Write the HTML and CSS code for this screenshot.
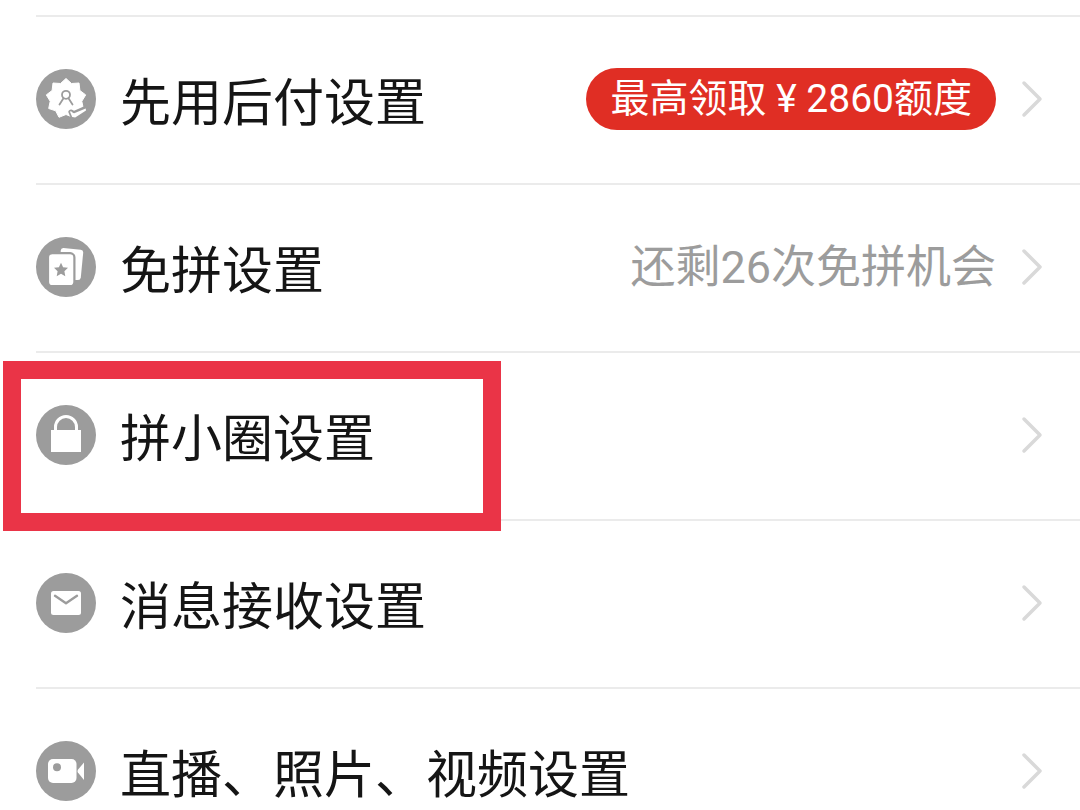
FILE: index.html
```html
<!DOCTYPE html>
<html lang="zh-CN">
<head>
    <meta charset="UTF-8">
    <meta name="viewport" content="width=device-width, initial-scale=1.0">
    <title>设置</title>
    <link rel="stylesheet" href="styles.css">
</head>
<body>
    <ul class="settings">
        <li class="item">
            <a class="row" href="#pay-later">
                <svg class="icon" viewBox="0 0 60 60" aria-hidden="true">
                    <circle cx="30" cy="30" r="30" fill="#9c9c9c"/>
                    <path d="M30 9.5L35.5 14.5L43 14L43.9 21.5L49.7 25.9L45.8 32.3L47.3 39.5L40.3 41.8L37 48.3L30 45.5L23 48.3L19.7 41.8L12.7 39.5L14.2 32.3L10.3 25.9L16.1 21.5L17 14L24.5 14.5Z" fill="#fff" stroke="#fff" stroke-linejoin="round"/>
                    <circle cx="30" cy="25.8" r="4" fill="none" stroke="#9c9c9c" stroke-width="1.8"/>
                    <path d="M27.5 29.2L23.5 35.5M32.5 29.2L36.5 35.5" fill="none" stroke="#9c9c9c" stroke-width="1.8" stroke-linecap="round"/>
                    <path d="M34 42.8C35 40.8 36.3 43.6 38.2 43.6L49.5 38.6L50.5 41.3L39.2 48.6L36.2 48Z" fill="#fff" stroke="#9c9c9c" stroke-width="3.4" stroke-linejoin="round"/>
                    <path d="M34 42.8C35 40.8 36.3 44.2 38.2 44.2L49.7 39.4L50 41.4L39.2 48.4L36.2 48Z" fill="#fff"/>
                </svg>
                <span class="label">先用后付设置</span>
                <span class="badge">最高领取 ¥ 2860额度</span>
                <svg class="arrow" viewBox="0 0 24 40" aria-hidden="true"><path d="M4 4L20 20L4 36"/></svg>
            </a>
        </li>
        <li class="item">
            <a class="row" href="#skip-group">
                <svg class="icon" viewBox="0 0 60 60" aria-hidden="true">
                    <circle cx="30" cy="30" r="30" fill="#9c9c9c"/>
                    <path d="M27.5 11L44.7 12.7Q47.4 13 47.2 15.7L44.8 40.5Q44.5 43 42 43H30L24.7 16V13.5Q25 10.8 27.5 11Z" fill="#fff"/>
                    <rect x="12" y="16.2" width="26.4" height="33" rx="4.2" fill="#fff" stroke="#9c9c9c" stroke-width="2.2"/>
                    <path d="M25 25.7L27.1 30.2L32 30.8L28.4 34.2L29.3 39.2L25 36.8L20.7 39.2L21.6 34.2L18 30.8L22.9 30.2Z" fill="#9c9c9c"/>
                </svg>
                <span class="label">免拼设置</span>
                <span class="note">还剩26次免拼机会</span>
                <svg class="arrow" viewBox="0 0 24 40" aria-hidden="true"><path d="M4 4L20 20L4 36"/></svg>
            </a>
        </li>
        <li class="item marked">
            <a class="row" href="#circle">
                <svg class="icon" viewBox="0 0 60 60" aria-hidden="true">
                    <circle cx="30" cy="30" r="30" fill="#9c9c9c"/>
                    <path d="M19.5 26V22A10.5 10.5 0 0 1 40.5 22V26" fill="none" stroke="#fff" stroke-width="3"/>
                    <rect x="15" y="25" width="30" height="22" fill="#fff"/>
                </svg>
                <span class="label">拼小圈设置</span>
                <svg class="arrow" viewBox="0 0 24 40" aria-hidden="true"><path d="M4 4L20 20L4 36"/></svg>
            </a>
        </li>
        <li class="item">
            <a class="row" href="#messages">
                <svg class="icon" viewBox="0 0 60 60" aria-hidden="true">
                    <circle cx="30" cy="30" r="30" fill="#9c9c9c"/>
                    <rect x="15" y="18" width="30" height="24" rx="2.5" fill="#fff"/>
                    <path d="M19 22.8L30 30.2L41 22.8" fill="none" stroke="#9c9c9c" stroke-width="2.4" stroke-linecap="round" stroke-linejoin="round"/>
                </svg>
                <span class="label">消息接收设置</span>
                <svg class="arrow" viewBox="0 0 24 40" aria-hidden="true"><path d="M4 4L20 20L4 36"/></svg>
            </a>
        </li>
        <li class="item">
            <a class="row" href="#media">
                <svg class="icon" viewBox="0 0 60 60" aria-hidden="true">
                    <circle cx="30" cy="30" r="30" fill="#9c9c9c"/>
                    <rect x="12" y="18" width="28.5" height="24" rx="5" fill="#fff"/>
                    <circle cx="21" cy="26.3" r="4" fill="#9c9c9c"/>
                    <path d="M48 21.5V39L41.9 31.6Q41 30.2 41.9 28.8Z" fill="#fff"/>
                </svg>
                <span class="label">直播、照片、视频设置</span>
                <svg class="arrow" viewBox="0 0 24 40" aria-hidden="true"><path d="M4 4L20 20L4 36"/></svg>
            </a>
        </li>
    </ul>
</body>
</html>
```
FILE: styles.css
```css
body {
    margin: 0;
    font-family: Roboto, "Noto Sans CJK SC", sans-serif;
    background-color: #fff;
    color: #151515;
}
.settings {
    list-style: none;
    margin: 0;
    padding: 15px 0 0 36px;
}
.item {
    position: relative;
    border-top: 2px solid #ebebeb;
}
.row {
    display: flex;
    align-items: center;
    height: 60px;
    padding: 52px 36px 54px 0;
    color: inherit;
    text-decoration: none;
}
.icon {
    flex: none;
    width: 60px;
    height: 60px;
    margin-right: 24px;
}
.label {
    flex: 1;
    padding-top: 10px;
    font-size: 51px;
    line-height: 60px;
    white-space: nowrap;
}
.badge {
    padding: 0 24px;
    border-radius: 32px;
    background-color: #e02e24;
    color: #fff;
    font-size: 39px;
    line-height: 62px;
    white-space: nowrap;
}
.note {
    padding-top: 2px;
    color: #9c9c9c;
    font-size: 45px;
    line-height: 60px;
    white-space: nowrap;
}
.arrow {
    flex: none;
    width: 24px;
    height: 40px;
    margin-left: 24px;
    fill: none;
    stroke: #d9d9d9;
    stroke-width: 3.5;
    stroke-linecap: round;
    stroke-linejoin: round;
}
/* red frame around the highlighted entry */
.marked::after {
    content: "";
    position: absolute;
    z-index: 1;
    top: 8px;
    bottom: -12px;
    left: -33px;
    width: 498px;
    box-sizing: border-box;
    border: 18px solid #ea3447;
    pointer-events: none;
}
```
